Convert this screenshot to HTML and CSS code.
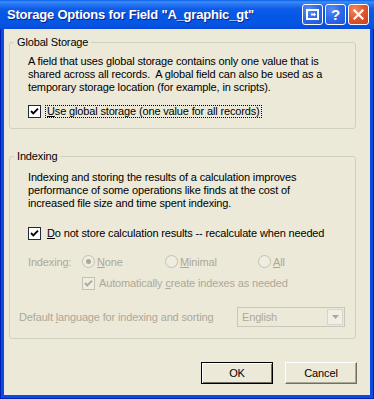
FILE: index.html
```html
<!DOCTYPE html>
<html>
<head>
<meta charset="utf-8">
<link rel="stylesheet" href="styles.css">
</head>
<body>
<div class="window">
  <div class="titlebar">
    <span class="title">Storage Options for Field "A_graphic_gt"</span>
    <div class="tbtns">
      <span class="tbtn blue">
        <svg width="13" height="11" viewBox="0 0 13 11"><rect x="1" y="1" width="11" height="9" fill="none" stroke="#fff" stroke-width="2"/><path d="M5 5.5h4" stroke="#fff" stroke-width="2"/><path d="M8 3.5l2 2-2 2z" fill="#fff"/></svg>
      </span>
      <span class="tbtn blue"><span class="q">?</span></span>
      <span class="tbtn red">
        <svg width="11" height="11" viewBox="0 0 11 11"><path d="M1.5 1.5l8 8M9.5 1.5l-8 8" stroke="#fff" stroke-width="2.2" stroke-linecap="square"/></svg>
      </span>
    </div>
  </div>
  <div class="client">
    <fieldset class="group g1">
      <legend>Global Storage</legend>
      <div class="gbody">
        <p class="desc">A field that uses global storage contains only one value that is<br>shared across all records.&nbsp; A global field can also be used as a<br>temporary storage location (for example, in scripts).</p>
        <div class="check mt11">
          <span class="box"><svg width="11" height="11" viewBox="0 0 11 11"><path d="M2 5l2.3 2.4L9 2.6" fill="none" stroke="#000" stroke-width="1.9"/></svg></span>
          <span class="lbl focus"><u>U</u>se global storage (one value for all records)</span>
        </div>
      </div>
    </fieldset>
    <fieldset class="group g2">
      <legend>Indexing</legend>
      <div class="gbody">
        <p class="desc">Indexing and storing the results of a calculation improves<br>performance of some operations like finds at the cost of<br>increased file size and time spent indexing.</p>
        <div class="check mt17">
          <span class="box"><svg width="11" height="11" viewBox="0 0 11 11"><path d="M2 5l2.3 2.4L9 2.6" fill="none" stroke="#000" stroke-width="1.9"/></svg></span>
          <span class="lbl plain"><u>D</u>o not store calculation results -- recalculate when needed</span>
        </div>
        <div class="radios">
          <span class="rlabel">Indexing:</span>
          <span class="ropt w83"><span class="radio on"></span><span class="rtext"><u>N</u>one</span></span>
          <span class="ropt w93"><span class="radio"></span><span class="rtext"><u>M</u>inimal</span></span>
          <span class="ropt"><span class="radio"></span><span class="rtext"><u>A</u>ll</span></span>
        </div>
        <div class="check auto">
          <span class="box dis"><svg width="11" height="11" viewBox="0 0 11 11"><path d="M2 5l2.3 2.4L9 2.6" fill="none" stroke="#ACA899" stroke-width="1.9"/></svg></span>
          <span class="lbl autotext">Automatically <u>c</u>reate indexes as needed</span>
        </div>
        <div class="langrow">
          <span class="langlbl">Default <u>l</u>anguage for indexing and sorting</span>
          <span class="combo"><span class="cval">English</span><span class="cbtn"><svg width="7" height="4" viewBox="0 0 7 4"><path d="M0 0h7L3.5 4z" fill="#ACA899"/></svg></span></span>
        </div>
      </div>
    </fieldset>
    <div class="buttons">
      <span class="btn default">OK</span>
      <span class="btn">Cancel</span>
    </div>
  </div>
</div>
</body>
</html>
```

FILE: styles.css
```css
html, body {
  margin: 0;
  padding: 0;
  background: #fff;
}
body {
  font-family: "Liberation Sans", Arial, sans-serif;
  font-size: 11px;
  letter-spacing: -0.15px;
  color: #000;
}
.window {
  width: 374px;
  height: 399px;
  display: flex;
  flex-direction: column;
  background: #0A4BE0;
  box-shadow: inset 1px 0 #0021B8, inset -1px 0 #0021B8, inset 0 -1px #0021B8;
}
.titlebar {
  height: 29px;
  display: flex;
  align-items: center;
  padding: 0 5px 0 7px;
  background: linear-gradient(to bottom, #0A5FE8 0, #3D8EF9 2px, #2A78F2 4px, #0D5CE8 9px, #0558E4 16px, #0556E2 24px, #0848D8 29px);
}
.title {
  flex: 1;
  color: #fff;
  font-weight: bold;
  font-size: 13px;
  letter-spacing: -0.2px;
  text-shadow: 1px 1px #0B1F8C;
  white-space: nowrap;
}
.tbtns {
  display: flex;
  gap: 2px;
}
.tbtn {
  width: 21px;
  height: 21px;
  box-sizing: border-box;
  border: 1px solid #fff;
  border-radius: 3px;
  display: flex;
  align-items: center;
  justify-content: center;
}
.blue {
  background: radial-gradient(circle at 30% 25%, #5A8DF5 0, #2F6BEB 45%, #1F55D8 100%);
}
.red {
  background: radial-gradient(circle at 30% 25%, #F08A64 0, #E2542C 50%, #C8401C 100%);
}
.q {
  color: #fff;
  font-weight: bold;
  font-size: 15px;
  line-height: 15px;
  font-family: "Liberation Sans", Arial, sans-serif;
}
.client {
  flex: 1;
  margin: 0 4px 4px 4px;
  background: #ECE9D8;
  padding: 7px 14px 0 5px;
}
.group {
  margin: 0;
  padding: 6px 0 10px 0;
  border: 1px solid #D0D0BF;
  border-radius: 3px;
  min-width: 0;
}
.g2 {
  margin-top: 21px;
  padding-top: 8px;
  padding-bottom: 11px;
}
legend {
  margin-left: 4px;
  padding: 0 3px;
  line-height: 13px;
}
.gbody {
  padding-left: 18px;
}
.desc {
  margin: 0;
  line-height: 13px;
}
.check {
  display: flex;
  align-items: center;
  height: 13px;
}
.mt11 { margin-top: 11px; }
.mt17 { margin-top: 17px; }
.box {
  width: 13px;
  height: 13px;
  box-sizing: border-box;
  border: 1px solid #1C2A3A;
  background: #fff;
  display: flex;
  align-items: center;
  justify-content: center;
  flex: none;
}
.box.dis {
  border-color: #C4C1B2;
  background: #EFEDE2;
}
.lbl {
  line-height: 11px;
  white-space: nowrap;
}
.focus {
  margin-left: 4px;
  padding: 0 1px;
  border: 1px dotted #000;
}
.plain {
  margin-left: 6px;
}
.radios {
  display: flex;
  align-items: center;
  height: 13px;
  margin-top: 15px;
  color: #ACA899;
}
.rlabel {
  width: 54px;
}
.ropt {
  display: flex;
  align-items: center;
}
.w83 { width: 83px; }
.w93 { width: 93px; }
.radio {
  width: 13px;
  height: 13px;
  box-sizing: border-box;
  border-radius: 50%;
  border: 1px solid #C4C1B2;
  background: #EFEDE2;
  display: flex;
  align-items: center;
  justify-content: center;
}
.radio.on::after {
  content: "";
  width: 5px;
  height: 5px;
  border-radius: 50%;
  background: #ACA899;
}
.rtext {
  margin-left: 2px;
}
.auto {
  margin-top: 9px;
  margin-left: 54px;
}
.autotext {
  margin-left: 4px;
  color: #ACA899;
}
.langrow {
  display: flex;
  align-items: center;
  justify-content: space-between;
  height: 20px;
  margin-top: 17px;
  margin-left: -9px;
  margin-right: 10px;
  color: #ACA899;
}
.combo {
  width: 108px;
  height: 20px;
  box-sizing: border-box;
  border: 1px solid #C9C7BA;
  background: #ECE9D8;
  display: flex;
  align-items: center;
  justify-content: space-between;
}
.cval {
  padding-left: 4px;
}
.cbtn {
  width: 16px;
  height: 16px;
  margin-right: 1px;
  box-sizing: border-box;
  border: 1px solid #D8D5C8;
  background: #F1EFE5;
  display: flex;
  align-items: center;
  justify-content: center;
}
.buttons {
  display: flex;
  justify-content: flex-end;
  gap: 12px;
  margin-top: 23px;
  margin-right: -1px;
}
.btn {
  width: 72px;
  height: 22px;
  box-sizing: border-box;
  display: flex;
  align-items: center;
  justify-content: center;
  background: #ECE9D8;
  border: 1px solid;
  border-color: #FFFFFF #716F64 #716F64 #FFFFFF;
  box-shadow: inset -1px -1px #ACA899;
}
.btn.default {
  border: 1px solid #000;
  box-shadow: inset 1px 1px #fff, inset -1px -1px #716F64;
}
```
